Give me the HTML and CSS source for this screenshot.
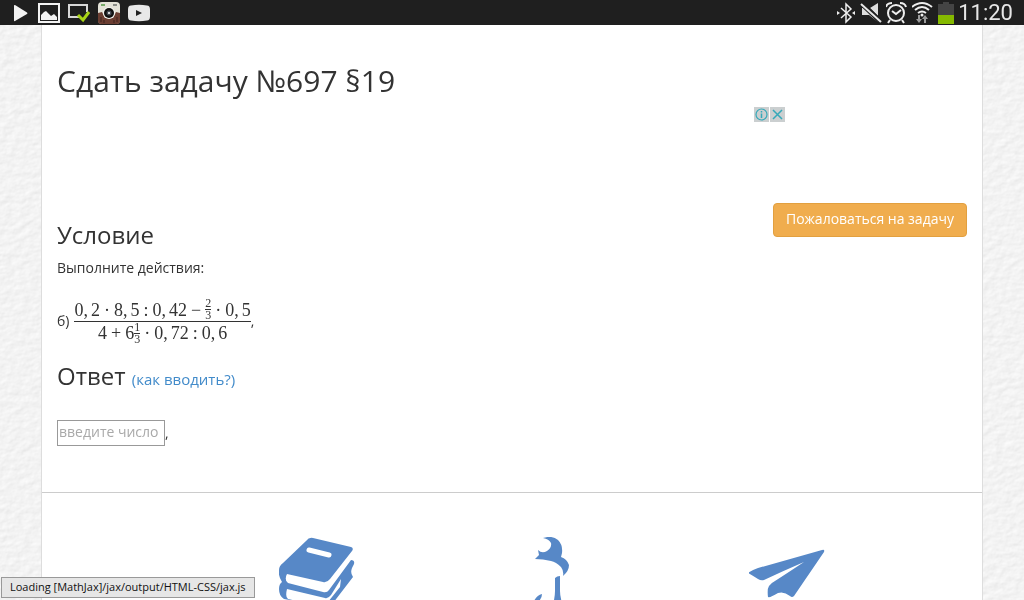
FILE: index.html
```html
<!doctype html>
<html lang="ru">
<head>
    <meta charset="UTF-8">
    <meta name="viewport" content="width=device-width, initial-scale=1.0">
    <title>Сдать задачу №697 §19</title>
    <link rel="stylesheet" href="styles.css">
</head>
<body>

<svg class="paper" aria-hidden="true">
    <filter id="grain" x="0" y="0" width="100%" height="100%" color-interpolation-filters="sRGB">
        <feTurbulence type="fractalNoise" baseFrequency="0.11 0.16" numOctaves="4" seed="8" result="noise"/>
        <feDiffuseLighting in="noise" surfaceScale="0.25" diffuseConstant="1.05" lighting-color="#fff">
            <feDistantLight azimuth="225" elevation="65"/>
        </feDiffuseLighting>
    </filter>
    <rect width="100%" height="100%" filter="url(#grain)"/>
</svg>

<header class="status-bar">
    <div class="status-icons">
        <svg width="16" height="18" viewBox="0 0 16 18"><path d="M0 1.500v15q0 1 1 .5l12-7q1-.8 0-1.600L1 1Q0 .6 0 1.500z" fill="#f2f2f2"/></svg>
        <svg width="22" height="20" viewBox="0 0 22 20"><path d="M1 1h20v18H1z" fill="none" stroke="#f2f2f2" stroke-width="2"/><path d="M3 17v-5l3-3 2-1 3 3 2 2 3-2 3 3v3z" fill="#f2f2f2"/></svg>
        <svg width="22" height="20" viewBox="0 0 22 20"><path d="M11 14H1V2h18v7" fill="none" stroke="#d8d8d8" stroke-width="2"/><path d="M10 12l5 5 6-8" fill="none" stroke="#a8d416" stroke-width="3"/></svg>
        <svg width="22" height="22" viewBox="0 0 22 22">
            <rect width="22" height="22" rx="4" fill="#e4e2d8"/>
            <path d="M0 11l4-1 3 6h8l3-6 4 1v8q0 3-3 3H3q-3 0-3-3z" fill="#6b3e32"/>
            <path d="M3 20v-5M6 21v-3M19 20v-5M16 21v-3" stroke="#3d211d"/>
            <path d="M3 3h4" stroke="#77aa69" stroke-width="2"/><path d="M15 3h4" stroke="#8a8c87" stroke-width="2"/>
            <circle cx="11" cy="11" r="6" fill="#f5f5f0"/><circle cx="11" cy="11" r="5" fill="#111"/>
            <circle cx="11" cy="11" r="2.500" fill="#464c55"/><circle cx="11" cy="11" r="1" fill="#fff"/>
        </svg>
        <svg width="22" height="18" viewBox="0 0 22 18"><path d="M3 1.500q8-1.500 16 0 3 0 3 4v7q0 4-3 4-8 1.500-16 0-3 0-3-4v-7q0-4 3-4z" fill="#e8e8e8"/><path d="M8 6l6 3-6 3z" fill="#222"/></svg>
    </div>
    <div class="status-icons status-right">
        <svg width="20" height="22" viewBox="0 0 20 22"><path d="M5 6l10 9-5 5V2l5 5-10 9" fill="none" stroke="#eee" stroke-width="1.500"/><path d="M1 9l3 2-3 2zM19 9l-3 2 3 2z" fill="#eee"/></svg>
        <svg width="22" height="22" viewBox="0 0 22 22"><path d="M2 6h6l10 9v5l-9-7H2zM10 6l8-5v13z" fill="#dedede"/><path d="M1 1l20 19" stroke="#1f1f1f" stroke-width="5"/><path d="M1 2l20 18" stroke="#e8e8e8" stroke-width="2"/></svg>
        <svg width="22" height="24" viewBox="0 0 22 24"><g fill="none" stroke="#eee" stroke-width="2"><circle cx="10" cy="12" r="8"/><path d="M0 6q1-4 6-4M20 6q-1-4-6-4M4 19l-2 3M16 19l2 3M6 10l4 3 5-4"/></g></svg>
        <svg width="22" height="24" viewBox="0 0 22 24"><g fill="none" stroke="#eee" stroke-width="2"><path d="M0 6q10-8 20 0M3 9q7-6 14 0M6 12q4-3 8 0"/></g><circle cx="10" cy="14" r="1.500" fill="#eee"/><path d="M4 18h2v-4h2v4h2l-3 4zM10 18l3-4 3 4h-2v4h-2v-4z" fill="#9b9b9b"/></svg>
        <svg width="16" height="22" viewBox="0 0 16 22"><path d="M0 2h5V0h6v2h5v12H0z" fill="#444"/><path d="M0 13h16v9H0z" fill="#85b900"/></svg>
        <time class="clock">11:20</time>
    </div>
</header>

<main class="page">
    <section class="task">
        <h1>Сдать задачу №697 §19</h1>

        <div class="ad">
            <a href="#" aria-label="О рекламе"><svg width="15" height="15" viewBox="0 0 15 15"><rect width="15" height="15" fill="#cbcfd0"/><circle cx="7.500" cy="7.500" r="5.500" fill="none" stroke="#35a9b9" stroke-width="1.200"/><path d="M7.500 6.500v4.500M7.500 4v1.500" stroke="#35a9b9" stroke-width="1.500"/></svg></a>
            <a href="#" aria-label="Закрыть рекламу"><svg width="15" height="15" viewBox="0 0 15 15"><rect width="15" height="15" fill="#cbcfd0"/><path d="M3 3l9 9M12 3l-9 9" stroke="#35a9b9" stroke-width="1.500"/></svg></a>
        </div>

        <div class="task-head">
            <h2>Условие</h2>
            <button type="button" class="btn-warning">Пожаловаться на задачу</button>
        </div>
        <p>Выполните действия:</p>

        <div class="formula">
            <span class="item">б)</span>
            <span class="frac">
                <span class="line">0<i>,</i>2<b>·</b>8<i>,</i>5<b>:</b>0<i>,</i>42<b>−</b><span class="frac small"><span>2</span><span>3</span></span><b>·</b>0<i>,</i>5</span>
                <span class="line">4<b>+</b>6<span class="frac small"><span>1</span><span>3</span></span><b>·</b>0<i>,</i>72<b>:</b>0<i>,</i>6</span>
            </span>
            <span>,</span>
        </div>

        <h2>Ответ <a href="#">(как вводить?)</a></h2>
        <form class="answer">
            <input type="text" name="answer" placeholder="введите число" aria-label="Ответ"><span>,</span>
        </form>
    </section>

    <footer class="links">
        <a href="#" aria-label="Учебники">
            <svg width="80" height="80" viewBox="0 0 80 80">
                <path d="M34 1l38 9q3 1 1 4L51 42q-3 4-7 3L8 37q-3 6 1 9l35 9q4 1 6-2l22-30q4 0 3 4l-2 4q-2 5 1 9L51 70 5 62q-5-3-5-10 0-5 3-7-4-6-3-12 0-4 4-7L27 4q3-4 7-3z" fill="#5788c7"/>
                <path d="M8 38l36 8q4 1 6-1l21-25-2 6-22 28-38-9q-3-1-1-7zM8 52l38 9q3 1 6-3l10-16-1 8-16 20-36-8q-3-2-1-10z" fill="#fff"/>
                <path d="M30 13l20 5" stroke="#fff" stroke-width="5" stroke-linecap="round"/>
            </svg>
        </a>
        <a href="#" aria-label="Ученики">
            <svg width="80" height="80" viewBox="0 0 80 80">
                <path d="M29 1q9-3 15 2 5 5 4 13l-1 4q6 2 8 8 0 6-6 11 1-5-2-9-5-5-10-6-8-2-16-2l4-4-1-5q4 4 9 1 5-3 4-8-2-4-8-5zM41 41q2-2 5-2v15q0 9 7 26H35q6-16 6-26zM20 64q3-6 8-7 0 4-3 7z" fill="#5788c7"/>
            </svg>
        </a>
        <a href="#" aria-label="Отправить">
            <svg width="80" height="80" viewBox="0 0 80 80">
                <path d="M-1 36q4-3 10-5l64-18q3-1 2 2L45 59q-2 2-4 0-6-5-12-3-8 5-10 4-1-8 1-11 2-3 6-5 14-9 29-19-21 9-40 18-3 1-6-1-5-3-10-6z" fill="#5788c7"/>
            </svg>
        </a>
    </footer>
</main>

<div class="mathjax-message" role="status">Loading [MathJax]/jax/output/HTML-CSS/jax.js</div>

</body>
</html>
```
FILE: styles.css
```css
* {
    box-sizing: border-box;
}

body {
    height: 100vh;
    margin: 0;
    overflow: hidden;
    display: flex;
    flex-direction: column;
    background-color: #f2f2f2;
    color: #333;
    font-family: "Open Sans", "Noto Sans", sans-serif;
    font-size: 14px;
    line-height: 20px;
}

.paper {
    position: fixed;
    z-index: -1;
    width: 100%;
    height: 100%;
}

.status-bar {
    display: flex;
    flex-shrink: 0;
    justify-content: space-between;
    height: 25px;
    padding: 0 11px 0 14px;
    background-color: #1f1f1f;
}

.status-icons {
    display: flex;
    align-items: center;
    gap: 8px;
}

.status-right {
    gap: 4px;
}

.clock {
    color: #e6e6e6;
    font-family: Roboto, sans-serif;
    font-size: 22px;
}

.page {
    flex: 1 0 auto;
    width: calc(100% - 82px);
    max-width: 942px;
    margin: 0 auto;
    background-color: #fff;
    border: solid #ddd;
    border-width: 0 1px;
}

.task {
    padding: 39px 15px 46px;
    border-bottom: 1px solid #ccc;
}

h1,
h2 {
    margin: 0;
    font-weight: normal;
}

h1 {
    margin-bottom: 10px;
    font-size: 30px;
    line-height: 33px;
}

h2 {
    font-size: 24px;
    line-height: 26px;
}

p {
    margin: 0;
}

a {
    color: #428bca;
    text-decoration: none;
}

h2 a {
    font-size: 15px;
}

.ad {
    display: flex;
    justify-content: flex-end;
    gap: 1px;
    max-width: 728px;
    height: 90px;
    margin-bottom: 6px;
}

.task-head {
    display: flex;
    justify-content: space-between;
    align-items: flex-start;
    margin-bottom: 10px;
}

.task-head h2 {
    margin-top: 19px;
}

.btn-warning {
    padding: 5px 12px 7px;
    border: 1px solid #e2a040;
    border-radius: 4px;
    background-color: #f0ad4e;
    color: #fff;
    font: inherit;
    cursor: pointer;
}

.formula {
    display: flex;
    align-items: center;
    margin: 20px 0 19px;
}

.item {
    margin-right: 5px;
}

.frac {
    display: inline-flex;
    flex-direction: column;
}

.line {
    display: flex;
    align-items: center;
    justify-content: center;
    height: 23px;
    font-family: "Liberation Serif", serif;
    font-size: 18px;
}

.line + .line {
    border-top: 1px solid #333;
}

.line i {
    margin-right: 3px;
    font-style: normal;
}

.line b {
    margin: 0 4px;
    font-weight: normal;
}

.small {
    font-size: 12px;
    line-height: 11px;
}

.small span + span {
    border-top: 1px solid #333;
}

.answer {
    display: flex;
    align-items: center;
    margin-top: 28px;
}

.answer input {
    width: 108px;
    height: 26px;
    padding: 0 1px 3px;
    border: 1px solid #999;
    border-radius: 0;
    background-color: #fff;
    color: #333;
    font: inherit;
}

.answer input::placeholder {
    color: #a9a9a9;
}

.links {
    display: grid;
    grid-template-columns: repeat(3, 1fr);
    width: 75%;
    margin-left: 17%;
    padding-top: 44px;
    justify-items: center;
}

.mathjax-message {
    position: fixed;
    bottom: 2px;
    left: 1px;
    padding: 0 8px 1px;
    border: 1px solid #999;
    background-color: #e6e6e6;
    color: #111;
    font-size: 11px;
    line-height: 18px;
}
```
